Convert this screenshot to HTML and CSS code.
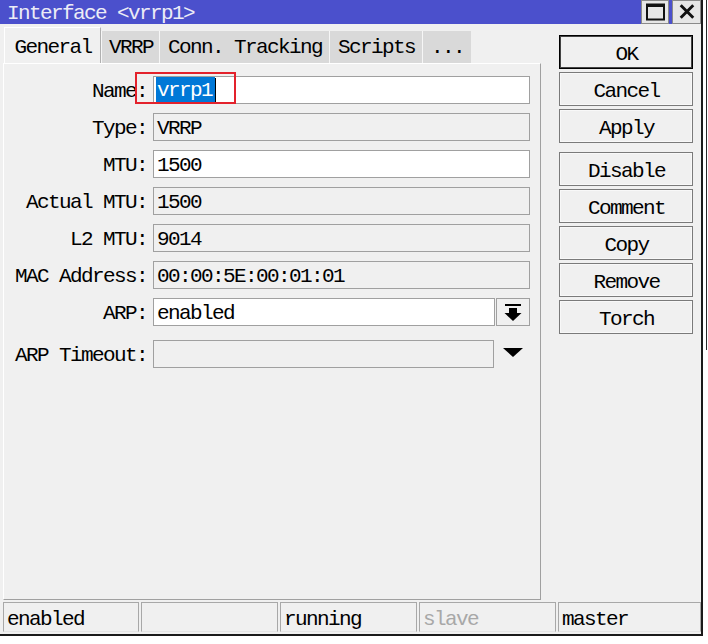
FILE: index.html
```html
<!DOCTYPE html>
<html>
<head>
<meta charset="utf-8">
<link rel="stylesheet" href="styles.css">
</head>
<body>
<div class="win">
  <div class="titlebar">
    <span class="title">Interface &lt;vrrp1&gt;</span>
    <div class="tb-btns">
      <div class="tbb max"><svg width="26" height="22" viewBox="0 0 26 22"><rect x="5" y="3.5" width="17" height="15" fill="none" stroke="#111" stroke-width="2"/><rect x="5" y="3" width="17" height="3" fill="#111"/></svg></div>
      <div class="tbb close"><svg width="28" height="22" viewBox="0 0 28 22"><path d="M8 4 L21 17 M21 4 L8 17" stroke="#111" stroke-width="3" fill="none"/></svg></div>
    </div>
  </div>
  <div class="main">
    <div class="left">
      <div class="tabs">
        <div class="tab active w-gen">General</div>
        <div class="tab w-vrrp">VRRP</div>
        <div class="tab w-conn">Conn. Tracking</div>
        <div class="tab w-scr">Scripts</div>
        <div class="tab w-more">...</div>
      </div>
      <div class="panel">
        <div class="annot"></div>
        <div class="row">
          <div class="lbl">Name:</div>
          <div class="fld edit name"><span class="sel">vrrp1</span><span class="caret"></span></div>
        </div>
        <div class="row">
          <div class="lbl">Type:</div>
          <div class="fld">VRRP</div>
        </div>
        <div class="row">
          <div class="lbl">MTU:</div>
          <div class="fld edit">1500</div>
        </div>
        <div class="row">
          <div class="lbl">Actual MTU:</div>
          <div class="fld">1500</div>
        </div>
        <div class="row">
          <div class="lbl">L2 MTU:</div>
          <div class="fld">9014</div>
        </div>
        <div class="row">
          <div class="lbl">MAC Address:</div>
          <div class="fld">00:00:5E:00:01:01</div>
        </div>
        <div class="row">
          <div class="lbl">ARP:</div>
          <div class="combo">
            <div class="fld edit grow">enabled</div>
            <div class="ddbtn"><svg width="32" height="26" viewBox="0 0 32 26"><rect x="8" y="5" width="16" height="2" fill="#000"/><rect x="12" y="9" width="8" height="5" fill="#000"/><path d="M7.5 14 L24.5 14 L16 22 Z" fill="#000"/></svg></div>
          </div>
        </div>
        <div class="row gap-top">
          <div class="lbl">ARP Timeout:</div>
          <div class="combo">
            <div class="fld grow short"></div>
            <div class="tri"><svg width="20" height="10" viewBox="0 0 20 10"><path d="M0 0 L20 0 L10 9 Z" fill="#000"/></svg></div>
          </div>
        </div>
      </div>
    </div>
    <div class="buttons">
      <div class="btn default">OK</div>
      <div class="btn">Cancel</div>
      <div class="btn">Apply</div>
      <div class="btn sep">Disable</div>
      <div class="btn">Comment</div>
      <div class="btn">Copy</div>
      <div class="btn">Remove</div>
      <div class="btn">Torch</div>
    </div>
  </div>
  <div class="status">
    <div class="cell c1">enabled</div>
    <div class="cell c2"></div>
    <div class="cell c2">running</div>
    <div class="cell c2 dim">slave</div>
    <div class="cell c5">master</div>
  </div>
</div>
<div class="edge"></div>
</body>
</html>
```
FILE: styles.css
```css
html, body {
  margin: 0;
  padding: 0;
  background: #ffffff;
}
body {
  width: 708px;
  height: 644px;
  overflow: hidden;
  display: flex;
  align-items: flex-start;
  font-family: "Liberation Mono", monospace;
  font-size: 21px;
  letter-spacing: -1.6px;
  color: #000;
}
.win {
  width: 701px;
  height: 634px;
  border-right: 2px solid #1a1a1a;
  border-bottom: 2px solid #1a1a1a;
  background: #f0f0f0;
  display: flex;
  flex-direction: column;
  flex: none;
}
.edge {
  width: 1px;
  height: 350px;
  margin-left: 3px;
  background: #2a2a2a;
}
.titlebar {
  height: 24px;
  background: #4b50cc;
  display: flex;
  justify-content: space-between;
  flex: none;
}
.title {
  display: block;
  height: 24px;
  box-sizing: border-box;
  color: #ececf6;
  padding-left: 7px;
  padding-top: 1px;
  line-height: 25px;
}
.tb-btns {
  display: flex;
  gap: 3px;
}
.tbb {
  height: 24px;
  box-sizing: border-box;
  background: #e6e6e6;
  border: 1px solid #8a8a8a;
  display: flex;
  align-items: center;
  justify-content: center;
}
.tbb svg { display: block; }
.max { width: 28px; }
.close { width: 29px; }

.main {
  display: flex;
  height: 576px;
  flex: none;
}
.left {
  width: 538px;
  padding-left: 3px;
  padding-top: 3px;
  display: flex;
  flex-direction: column;
}
.tabs {
  height: 36px;
  display: flex;
  align-items: flex-end;
  padding-left: 1px;
}
.tab {
  height: 32px;
  box-sizing: border-box;
  background: #d9d9d9;
  border-left: 1px solid #f6f6f6;
  text-align: center;
  padding-top: 4px;
  line-height: 25px;
  padding-left: 1px;
}
.tab.active {
  height: 36px;
  background: #f0f0f0;
  border-top: 1px solid #ffffff;
  border-left: 1px solid #ffffff;
  border-right: 1px solid #b0b0b0;
  padding-top: 7px;
}
.w-gen { width: 97px; }
.w-vrrp { width: 58px; }
.w-conn { width: 170px; }
.w-scr { width: 93px; }
.w-more { width: 49px; }

.panel {
  position: relative;
  height: 537px;
  box-sizing: border-box;
  border-top: 1px solid #ffffff;
  border-left: 1px solid #ffffff;
  border-right: 1px solid #a0a0a0;
  border-bottom: 1px solid #a0a0a0;
  padding: 12px 10px 0 0;
  display: flex;
  flex-direction: column;
  gap: 9px;
}
.annot {
  position: absolute;
  left: 131px;
  top: 8px;
  width: 97px;
  height: 28px;
  border: 2px solid #e3222c;
}
.row {
  display: flex;
  align-items: flex-start;
  height: 28px;
}
.row.gap-top { margin-top: 5px; }
.lbl {
  width: 143px;
  height: 28px;
  box-sizing: border-box;
  text-align: right;
  margin-right: 6px;
  padding-top: 3px;
  line-height: 25px;
  white-space: nowrap;
}
.fld {
  width: 377px;
  height: 28px;
  box-sizing: border-box;
  border: 1px solid #a0a0a0;
  background: #f0f0f0;
  padding-left: 3px;
  padding-top: 2px;
  line-height: 25px;
  white-space: nowrap;
  overflow: hidden;
}
.fld.edit { background: #ffffff; }
.fld.name {
  padding-top: 0;
  padding-left: 2px;
  display: flex;
  align-items: center;
}
.sel {
  display: block;
  background: #0078d7;
  color: #ffffff;
  height: 26px;
  box-sizing: border-box;
  padding-top: 2px;
  padding-left: 1px;
  padding-right: 3px;
  line-height: 24px;
}
.caret {
  width: 1px;
  height: 24px;
  background: #000;
}
.combo {
  display: flex;
  align-items: center;
  width: 377px;
}
.fld.grow { width: 342px; }
.fld.short { width: 341px; }
.ddbtn {
  width: 34px;
  height: 28px;
  box-sizing: border-box;
  margin-left: 1px;
  border: 1px solid #a0a0a0;
  background: #f0f0f0;
}
.ddbtn svg, .tri svg { display: block; }
.tri {
  margin-left: 9px;
  margin-bottom: 2px;
}

.buttons {
  margin-left: 18px;
  padding-top: 11px;
  display: flex;
  flex-direction: column;
  gap: 3px;
}
.btn {
  width: 134px;
  height: 34px;
  box-sizing: border-box;
  border: 1px solid #7a7a7a;
  box-shadow: inset 0 0 0 1px #f8f8f8;
  text-align: center;
  padding-top: 6px;
  line-height: 25px;
  padding-left: 1px;
}
.btn.default {
  border-color: #000;
  box-shadow: inset 0 0 0 1px #444;
}
.btn.sep { margin-top: 6px; }

.status {
  margin-top: 2px;
  height: 30px;
  padding-left: 3px;
  display: flex;
  gap: 2px;
  flex: none;
}
.cell {
  height: 30px;
  box-sizing: border-box;
  border: 1px solid #a8a8a8;
  border-bottom-color: #e4e4e4;
  padding-left: 3px;
  padding-top: 4px;
  line-height: 25px;
  white-space: nowrap;
}
.c1 { width: 136px; }
.c2 { width: 137px; }
.c5 { width: 143px; }
.dim { color: #a8a8a8; }
```
